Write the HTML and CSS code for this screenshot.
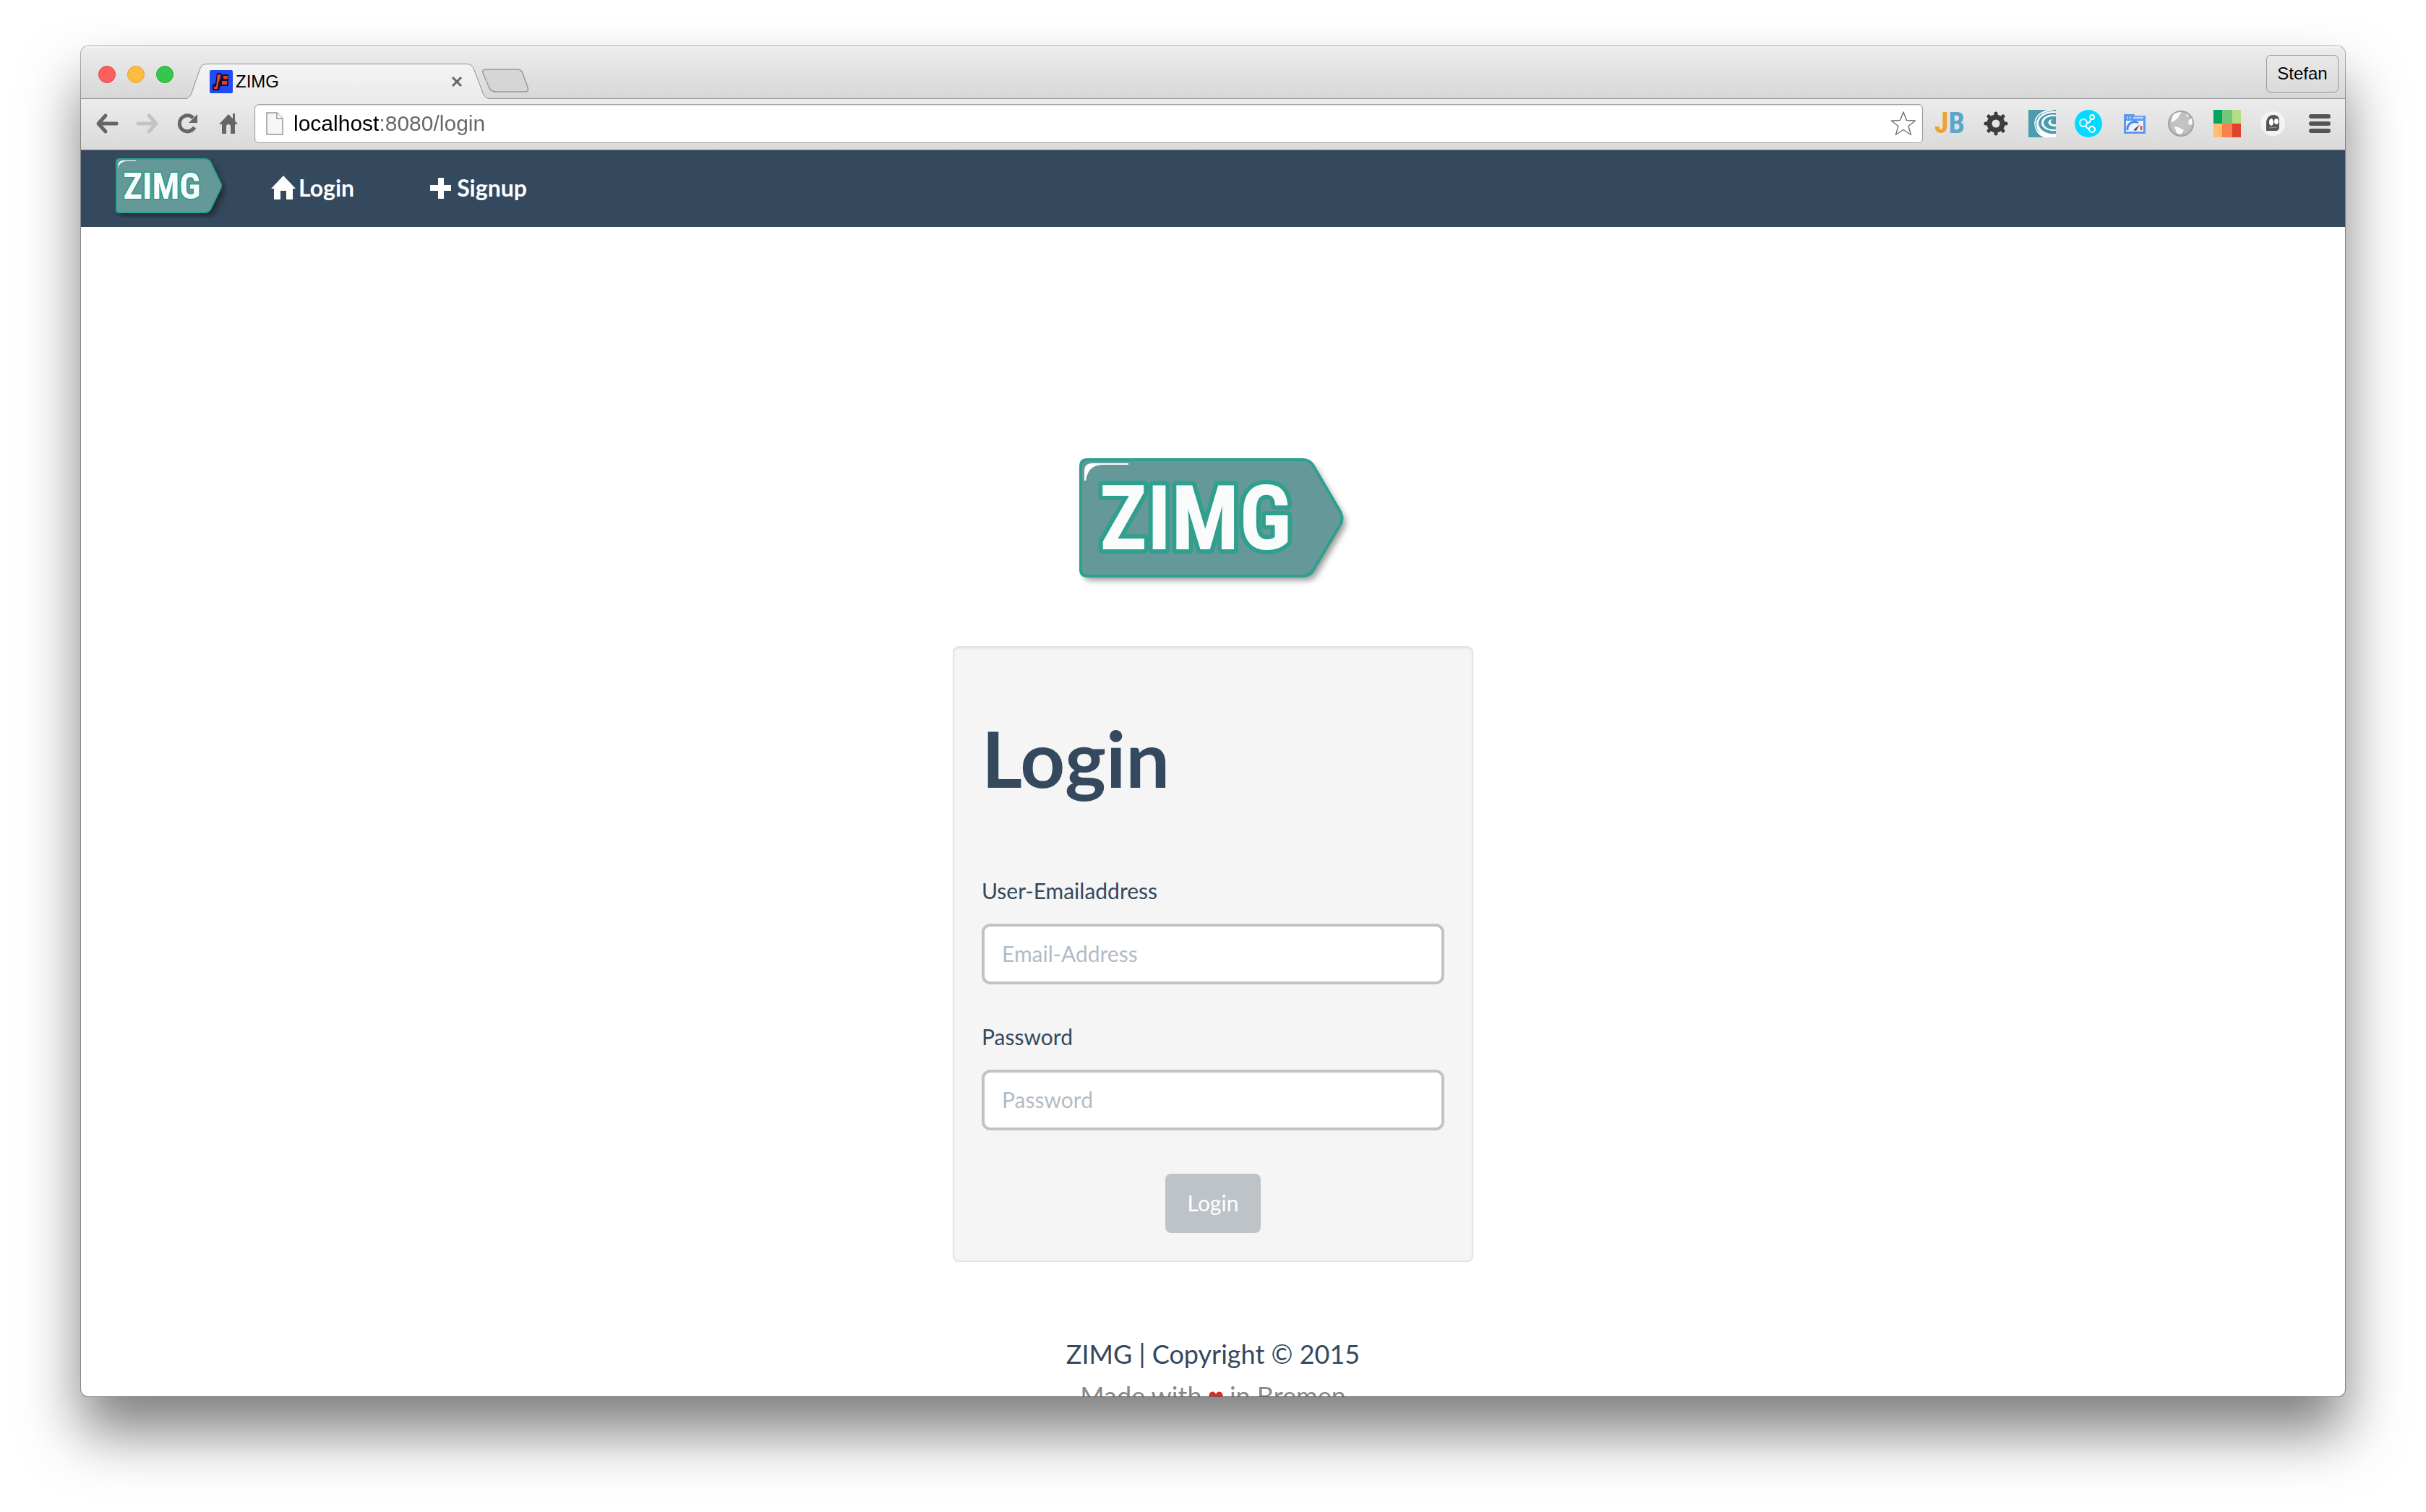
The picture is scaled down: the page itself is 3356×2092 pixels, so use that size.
FILE: index.html
```html
<!DOCTYPE html>
<html lang="en">
<head>
<meta charset="utf-8">
<meta name="viewport" content="width=device-width, initial-scale=1">
<title>ZIMG</title>
<link rel="stylesheet" href="styles.css">
</head>
<body>
<div class="window">
  <header class="titlebar">
    <div class="lights">
      <button class="light light-close" aria-label="Close window"></button>
      <button class="light light-min" aria-label="Minimize window"></button>
      <button class="light light-max" aria-label="Zoom window"></button>
    </div>
    <div class="tab">
      <svg class="tab-shape" viewBox="0 0 422 49" preserveAspectRatio="none" aria-hidden="true">
        <defs><linearGradient id="tabfill" x1="0" y1="0" x2="0" y2="1"><stop offset="0" stop-color="#f4f4f4"/><stop offset="1" stop-color="#ebebeb"/></linearGradient></defs>
        <path d="M0 49C6 48 8 44 10 38L20 9C22 3 25 0.500 31 0.500H389C395 0.500 398 3 400 9L411 38C413 44 415 48 422 49Z" fill="url(#tabfill)"/>
        <path d="M0 48.500C6 48 8 44 10 38L20 9C22 3 25 0.500 31 0.500H389C395 0.500 398 3 400 9L411 38C413 44 415 48 422 48.500" fill="none" stroke="#8f8f8f"/>
      </svg>
      <svg class="favicon" viewBox="0 0 32 32" aria-hidden="true">
        <rect width="32" height="32" rx="2" fill="#1f4cf5"/>
        <path d="M10 4H16V6H26V22H15L13 28H4V20L8 18Z" fill="#10103a"/>
        <path d="M11 6h4v4l-3 8-1 8H6v-3h3z" fill="#f8401c"/>
        <path d="M19 8h6v4h-6zM17 15h7v5h-7z" fill="#f03a1c"/>
      </svg>
      <span class="tab-title">ZIMG</span>
      <button class="tab-close" aria-label="Close tab"><svg width="16" height="16" viewBox="0 0 16 16"><path d="M2 2L14 14M14 2L2 14" stroke="#666" stroke-width="3"/></svg></button>
    </div>
    <button class="new-tab" aria-label="New tab">
      <svg width="66" height="34" viewBox="0 0 66 34"><path d="M7 1H49Q55 1 57 6L64 26Q66 32 60 32H20Q14 32 11 27L2 6Q0 1 7 1Z" fill="#d6d6d6" stroke="#9a9a9a" stroke-width="1.500"/></svg>
    </button>
    <button class="profile">Stefan</button>
  </header>

  <div class="toolbar">
    <button class="tool" aria-label="Back"><svg width="32" height="30" viewBox="0 0 32 30"><path d="M14 4L4 15L14 26M5 15H29" fill="none" stroke="#666" stroke-width="5" stroke-linecap="round" stroke-linejoin="round"/></svg></button>
    <button class="tool" aria-label="Forward"><svg width="32" height="30" viewBox="0 0 32 30"><path d="M18 4L28 15L18 26M27 15H3" fill="none" stroke="#c4c4c4" stroke-width="5" stroke-linecap="round" stroke-linejoin="round"/></svg></button>
    <button class="tool" aria-label="Reload"><svg width="30" height="30" viewBox="0 0 30 30"><path d="M24 20A11 11 0 1 1 22 7" fill="none" stroke="#666" stroke-width="5"/><path d="M28 2V14H16Z" fill="#666"/></svg></button>
    <button class="tool" aria-label="Home"><svg width="28" height="30" viewBox="0 0 28 30"><path d="M14 2L1 16H5V29H11V19Q11 16 14 16T17 19V29H23V16H27L23 11V1H20V8Z" fill="#666"/></svg></button>
    <div class="omnibox">
      <svg width="24" height="32" viewBox="0 0 24 32" aria-hidden="true"><path d="M1 1H15L23 9V31H1Z" fill="#f6f6f6" stroke="#979797" stroke-width="1.500"/><path d="M15 1V9H23" fill="#fff" stroke="#979797" stroke-width="1.500"/></svg>
      <input class="url" type="text" aria-label="Address" value="localhost:8080/login">
      <button class="star" aria-label="Bookmark"><svg width="36" height="36" viewBox="0 0 36 36"><path d="M18 2L22.500 13.500L34.500 14L25 21.500L28.500 33.500L18 26.500L7.500 33.500L11 21.500L1.500 14L13.500 13.500Z" fill="#fff" stroke="#777" stroke-width="1.500" stroke-linejoin="round"/></svg></button>
    </div>
    <button class="ext ext-jb" aria-label="JB"><span class="ext-j">J</span><span class="ext-b">B</span></button>
    <button class="ext" aria-label="Settings"><svg width="38" height="38" viewBox="0 0 38 38"><g fill="none" stroke="#3d3d3d"><circle cx="19" cy="19" r="9" stroke-width="7"/><path stroke-width="5" stroke-linecap="round" d="M19 5V8M19 30V33M5 19H8M30 19H33M9 9L11 11M27 27L29 29M9 29L11 27M27 11L29 9"/></g></svg></button>
    <button class="ext" aria-label="Swirl"><svg width="38" height="38" viewBox="0 0 38 38"><rect width="38" height="38" fill="#4c9cae"/><path d="M38 0H26C12 4 6 13 9 24C11 32 17 37 22 38H38V33C26 34 15 29 14 19C14 10 24 3 38 4V2C22 1 11 9 11 20C11 26 14 30 17 33C10 28 8 20 11 13C14 6 22 2 38 0Z" fill="#fff"/><path d="M38 7C27 5 18 11 18 18C18 25 27 30 38 29V27C29 28 21 24 21 18C21 12 28 8 38 9Z" fill="#fff"/><path d="M33 13C25 14 25 23 38 23V20C32 21 28 17 33 13Z" fill="#fff"/></svg></button>
    <button class="ext" aria-label="Share"><svg width="38" height="38" viewBox="0 0 38 38"><circle cx="19" cy="19" r="19" fill="#00dcff"/><g fill="none" stroke="#fff" stroke-width="2"><circle cx="12" cy="18" r="5"/><circle cx="24" cy="10" r="3"/><circle cx="24" cy="27" r="4"/><path d="M17 18Q22 18 22 13M15 22Q17 26 20 26"/></g></svg></button>
    <button class="ext" aria-label="Page speed"><svg width="38" height="38" viewBox="0 0 38 38"><path d="M4 6H18L20 8H34V33H4Z" fill="#5b97ee"/><path d="M7 15H31V30H7Z" fill="#eef4fd"/><path d="M8 11H10M12 11H14M17 11H31" stroke="#b5d3fd" stroke-width="3"/><path d="M9 28A10 10 0 0 1 24 18" fill="none" stroke="#4887e0" stroke-width="3"/><path d="M17 28L26 20L21 29Z" fill="#555"/><path d="M28 22v6" stroke="#e55" stroke-width="3"/></svg></button>
    <button class="ext" aria-label="Globe"><svg width="38" height="38" viewBox="0 0 38 38"><defs><radialGradient id="globe"><stop offset="0" stop-color="#c4c4c4"/><stop offset="0.800" stop-color="#c0c0c0"/><stop offset="1" stop-color="#999"/></radialGradient></defs><circle cx="19" cy="19" r="18" fill="url(#globe)"/><path d="M8 7Q13 3 20 3L17 7L15 11L9 16L5 17ZM30 14L34 12L35 20L31 21L29 18ZM10 23L15 24L23 28L19 34L13 32ZM26 5L31 9L27 9Z" fill="#fafafa"/></svg></button>
    <button class="ext" aria-label="Colours"><svg width="38" height="38" viewBox="0 0 38 38"><path d="M0 0H12V19H0Z" fill="#00a55e"/><path d="M12 0H26V19H12Z" fill="#74c67a"/><path d="M26 0H38V19H26Z" fill="#b4df80"/><path d="M0 19H12V38H0Z" fill="#ffbd74"/><path d="M12 19H26V38H12Z" fill="#f9804f"/><path d="M26 19H38V38H26Z" fill="#e0432b"/></svg></button>
    <button class="ext" aria-label="Ghost"><svg width="38" height="38" viewBox="0 0 38 38"><circle cx="18" cy="19" r="17" fill="#f4f4f4"/><path d="M9 29V16Q11 7 19 7T27 15V24Q27 29 22 29Z" fill="#555"/><ellipse cx="16" cy="17" rx="3" ry="5" fill="#fff"/><ellipse cx="23" cy="16" rx="3" ry="4" fill="#fff"/><path d="M13 25L24 24" stroke="#999" stroke-width="1"/></svg></button>
    <button class="ext" aria-label="Menu"><svg width="38" height="38" viewBox="0 0 38 38"><path d="M7 9H31M7 19H31M7 29H31" stroke="#555" stroke-width="6" stroke-linecap="round"/></svg></button>
  </div>

  <nav class="navbar">
    <a class="brand" href="#" aria-label="ZIMG">
      <svg width="154" height="82" viewBox="0 0 154 82">
        <path class="plate-shadow" d="M5 1H123Q128 1 131 5L145 34Q147 38 145 42L131 71Q128 75 123 75H5Q1 75 1 71V5Q1 1 5 1Z"/>
        <path class="plate" stroke-width="2" d="M5 1H123Q128 1 131 5L145 34Q147 38 145 42L131 71Q128 75 123 75H5Q1 75 1 71V5Q1 1 5 1Z"/>
        <path d="M28 3H10Q3 3 3 14Q5 5 14 4H28Z" fill="#fff"/>
        <text class="mark mark-small" x="64" y="56" text-anchor="middle">ZIMG</text>
      </svg>
    </a>
    <a class="nav-link" href="#login"><svg width="34" height="34" viewBox="0 0 34 34" aria-hidden="true"><path d="M17 0L34 18H30V33H21V21H13V33H4V18H0Z" fill="#fff"/></svg>Login</a>
    <a class="nav-link" href="#signup"><svg width="34" height="34" viewBox="0 0 34 34" aria-hidden="true"><path d="M12 3H20V13H30V21H20V32H12V21H1V13H12Z" fill="#fff"/></svg>Signup</a>
  </nav>

  <main class="page">
    <svg class="hero" width="388" height="200" viewBox="24 24 388 200" role="img" aria-label="ZIMG">
      <path class="plate-shadow" d="M44 36H342Q351 36 356 43L394 108Q399 117 394 126L356 190Q351 197 342 197H44Q35 197 35 188V45Q35 36 44 36Z"/>
      <path class="plate" stroke-width="4" d="M44 36H342Q351 36 356 43L394 108Q399 117 394 126L356 190Q351 197 342 197H44Q35 197 35 188V45Q35 36 44 36Z"/>
      <path d="M101 41H51Q40 41 40 52V65H42Q45 43 66 43H101Z" fill="#fff"/>
      <text class="mark mark-large" x="194" y="160" text-anchor="middle">ZIMG</text>
    </svg>
    <form class="card">
      <h1>Login</h1>
      <label for="email">User-Emailaddress</label>
      <input class="field" id="email" type="email" placeholder="Email-Address">
      <label for="password">Password</label>
      <input class="field" id="password" type="password" placeholder="Password">
      <button class="submit" type="button">Login</button>
    </form>
    <footer class="footer">
      <p class="copyright">ZIMG | Copyright © 2015</p>
      <p class="made">Made with <svg width="20" height="20" viewBox="0 0 20 20" role="img" aria-label="love"><path d="M10 19L1 9Q-1 4 3 1Q8 -1 10 4Q12 -1 17 1Q21 4 19 9Z" fill="#d92b2b"/></svg> in Bremen</p>
    </footer>
  </main>
</div>
</body>
</html>
```
FILE: styles.css
```css
* {
  box-sizing: border-box;
}

body {
  margin: 0;
  height: 100vh;
  padding: 64px 112px 160px;
  background: #fff;
  color: #34495e;
  font-family: Lato, sans-serif;
  overflow: hidden;
}

button {
  margin: 0;
  padding: 0;
  border: 0;
  background: none;
  font: inherit;
}

svg {
  display: block;
  flex: none;
}

.window {
  display: flex;
  flex-direction: column;
  height: 100%;
  border-radius: 10px;
  background: #fff;
  box-shadow: 0 0 0 1px rgba(0, 0, 0, 0.3), 0 50px 80px rgba(0, 0, 0, 0.5);
  overflow: hidden;
}

/* Browser chrome */

.titlebar {
  display: flex;
  align-items: flex-end;
  flex: none;
  height: 73px;
  padding: 0 9px 0 24px;
  background: linear-gradient(#ededed, #d7d7d7);
  box-shadow: inset 0 2px 0 #f6f6f6, inset 0 -1px 0 #8f8f8f;
  font-family: "Liberation Sans", Arial, sans-serif;
  font-size: 24px;
  color: #000;
}

.lights {
  display: flex;
  align-items: center;
  gap: 16px;
  height: 100%;
  padding-top: 4px;
}

.light {
  width: 24px;
  height: 24px;
  border: 1px solid #e0443e;
  border-radius: 50%;
  background: #fc605c;
}

.light-min {
  border-color: #dea236;
  background: #fdbc40;
}

.light-max {
  border-color: #27aa35;
  background: #34c84a;
}

.tab {
  position: relative;
  display: flex;
  align-items: center;
  width: 422px;
  height: 49px;
  margin-left: 16px;
  padding: 0 38px 0 34px;
}

.tab-shape {
  position: absolute;
  inset: 0;
  width: 100%;
  height: 100%;
}

.favicon,
.tab-title,
.tab-close {
  position: relative;
}

.favicon {
  width: 32px;
  height: 32px;
}

.tab-title {
  flex: 1;
  padding-left: 4px;
}

.new-tab {
  margin: 0 auto 8px -12px;
}

.profile {
  width: 100px;
  height: 52px;
  margin-bottom: 9px;
  padding-bottom: 0;
  border: 1px solid #999;
  border-radius: 6px;
  text-shadow: 0 1px 0 #fff;
}

.toolbar {
  display: flex;
  align-items: center;
  flex: none;
  height: 71px;
  padding: 0 3px 2px 8px;
  border-bottom: 1px solid #777;
  background: linear-gradient(#ececec, #dadada);
}

.tool {
  display: flex;
  justify-content: center;
  width: 56px;
}

.omnibox {
  display: flex;
  align-items: center;
  flex: 1;
  gap: 14px;
  height: 54px;
  margin: 0 5px 0 8px;
  padding: 0 8px 0 15px;
  border: 1px solid #a0a0a0;
  border-radius: 6px;
  background: #fff;
  box-shadow: inset 0 1px 2px rgba(0, 0, 0, 0.15);
}

/* The host part of the address is black, the rest grey. */
.url {
  flex: 1;
  min-width: 0;
  height: 40px;
  padding: 0;
  border: 0;
  background: linear-gradient(90deg, #000 118px, #666 118px);
  -webkit-background-clip: text;
  background-clip: text;
  color: transparent;
  font-family: "Liberation Sans", Arial, sans-serif;
  font-size: 30px;
}

.ext {
  display: flex;
  align-items: center;
  justify-content: center;
  width: 64px;
  height: 38px;
}

.ext-jb {
  font-family: "Roboto Condensed", Lato, sans-serif;
  font-size: 40px;
  font-weight: 700;
  line-height: 38px;
}

.ext-j {
  color: #eda42f;
}

.ext-b {
  color: #5aa5c8;
}

/* Site navigation */

.navbar {
  display: flex;
  align-items: center;
  flex: none;
  height: 106px;
  padding: 0 0 2px 48px;
  background: #34495e;
}

.brand {
  margin-right: 9px;
}

.nav-link {
  display: flex;
  align-items: center;
  gap: 4px;
  padding: 0 52px;
  color: #fff;
  font-size: 32px;
  font-weight: 700;
  line-height: 40px;
  text-decoration: none;
}

.plate {
  fill: #659999;
  stroke: #2fa08d;
}

.plate-shadow {
  fill: #000;
  filter: drop-shadow(5px 6px 4px rgba(0, 0, 0, 0.4));
}

.mark {
  fill: #fafcfb;
  stroke: #2fa08d;
  stroke-linejoin: round;
  paint-order: stroke;
  font-family: "Roboto Condensed", "Open Sans Condensed", "Liberation Sans Narrow", "Liberation Sans", sans-serif;
  font-weight: 700;
}

.mark-large {
  stroke-width: 12px;
  font-size: 124px;
}

.mark-small {
  stroke-width: 4px;
  font-size: 50px;
}

/* Login page */

.page {
  display: flex;
  flex-direction: column;
  align-items: center;
  flex: 1;
  min-height: 0;
  padding-top: 310px;
}

.card {
  display: flex;
  flex-direction: column;
  flex: none;
  width: 720px;
  max-width: 100%;
  margin-top: 70px;
  padding: 92px 38px 38px;
  border: 2px solid #e3e3e3;
  border-radius: 8px;
  background: #f5f5f5;
  box-shadow: inset 0 2px 2px rgba(0, 0, 0, 0.05);
  font-size: 30px;
  line-height: 40px;
}

.card h1 {
  margin: 0 0 104px;
  font-size: 108px;
  font-weight: 700;
  line-height: 120px;
}

.field {
  height: 84px;
  margin: 26px 0 52px;
  padding: 0 24px 2px;
  border: 4px solid #bdc3c7;
  border-radius: 12px;
  background: #fff;
  color: #34495e;
  font: inherit;
}

.field::placeholder {
  color: #b2bcc5;
  opacity: 1;
}

.submit {
  align-self: center;
  height: 82px;
  margin-top: 8px;
  padding: 0 31px 2px;
  border-radius: 8px;
  background: #bdc3c7;
  color: #fff;
}

.footer {
  flex: none;
  margin-top: 105px;
  text-align: center;
  line-height: 44px;
}

.footer p {
  margin: 0 0 14px;
}

.copyright {
  font-size: 36px;
}

.made {
  color: #888;
  font-size: 36px;
}

.made svg {
  display: inline-block;
}
```
